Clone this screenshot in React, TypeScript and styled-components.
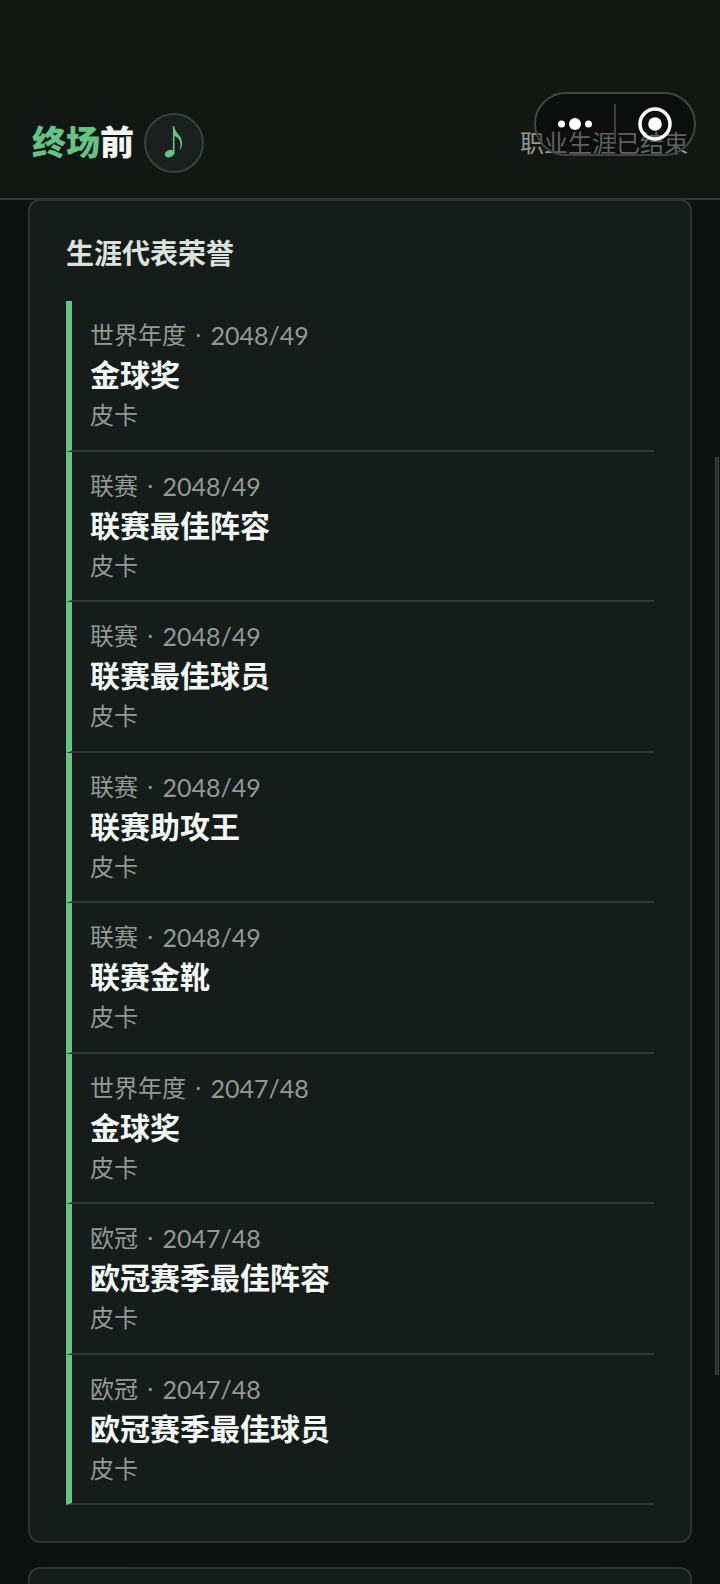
import React from "react";
import styled, { createGlobalStyle } from "styled-components";

const GlobalStyle = createGlobalStyle`
  *, *::before, *::after { box-sizing: border-box; }
  html, body { margin: 0; background: #0d1110; }
  body {
    overflow-x: hidden;
    font-family: Lato, "Noto Sans CJK SC", sans-serif;
    color: #f3f7f5;
  }
  h1, h2, h3, p, ul { margin: 0; padding: 0; }
  button { padding: 0; border: 0; background: none; color: inherit; font: inherit; cursor: pointer; }
`;

const Screen = styled.div`
  position: relative;
  height: 100vh;
  overflow: hidden;
  background: linear-gradient(90deg, #0d110f 0%, #0e1211 50%, #0d1110 100%);
`;

const Header = styled.header`
  display: flex;
  align-items: center;
  justify-content: space-between;
  padding: 113px 32px 25px;
  border-bottom: 2px solid #333836;
  background: #121714;
`;

const Brand = styled.div`
  display: flex;
  align-items: center;
  gap: 10px;
`;

const Logo = styled.h1`
  padding-bottom: 2px;
  font-size: 34px;
  line-height: 40px;
  font-weight: 900;
`;

const LogoAccent = styled.span`
  color: #66c285;
`;

const MusicButton = styled.button`
  display: grid;
  place-items: center;
  width: 60px;
  height: 60px;
  border: 2px solid #3b413e;
  border-radius: 50%;
  background: #1a201d;
  color: #66c285;
`;

const Status = styled.p`
  font-size: 24px;
  line-height: 40px;
  color: #929996;
`;

const Capsule = styled.div`
  position: absolute;
  top: 92px;
  right: 24px;
  display: flex;
  align-items: center;
  width: 162px;
  height: 64px;
  border: 2px solid #414543;
  border-radius: 32px;
  background: rgba(0, 0, 0, 0.36);
`;

const CapsuleButton = styled.button`
  flex: 1;
  display: grid;
  place-items: center;
  height: 60px;
  color: #ffffff;
`;

const CapsuleDivider = styled.span`
  width: 2px;
  height: 40px;
  background: #3d413f;
`;

const Content = styled.main`
  display: flex;
  flex-direction: column;
  gap: 24px;
  padding: 0 28px;
`;

const Card = styled.section<{ $continued?: boolean }>`
  padding: 32px 36px 36px;
  margin-top: ${(p) => (p.$continued ? "-1px" : "0")};
  border: 2px solid #2e3532;
  border-radius: 12px;
  background: #161c1a;
`;

const CardTitle = styled.h2`
  margin-bottom: 28px;
  font-size: 28px;
  line-height: 40px;
  font-weight: 700;
  color: #dce3df;
`;

const HonourList = styled.ul`
  display: grid;
  grid-auto-rows: 1fr;
  min-height: 1204px;
  list-style: none;
`;

const Honour = styled.li`
  padding: 15px 0 13px 18px;
  border-left: 6px solid #66c285;
  border-bottom: 2px solid #333836;
`;

const Meta = styled.p`
  display: flex;
  gap: 9px;
  font-size: 24px;
  line-height: 38px;
  color: #929996;
`;

const Dot = styled.span`
  font-family: "Noto Sans", sans-serif;
`;

const Season = styled.span`
  font-size: 25px;
`;

const HonourName = styled.h3`
  font-size: 30px;
  line-height: 40px;
  font-weight: 700;
`;

const Player = styled.p`
  font-size: 24px;
  line-height: 42px;
  color: #929996;
`;

const ScrollThumb = styled.div`
  position: absolute;
  top: 457px;
  right: 1px;
  width: 4px;
  height: 918px;
  border: 1px solid #3b403e;
  background: #2a2f2d;
`;

const honours = [
  { scope: "世界年度", season: "2048/49", name: "金球奖" },
  { scope: "联赛", season: "2048/49", name: "联赛最佳阵容" },
  { scope: "联赛", season: "2048/49", name: "联赛最佳球员" },
  { scope: "联赛", season: "2048/49", name: "联赛助攻王" },
  { scope: "联赛", season: "2048/49", name: "联赛金靴" },
  { scope: "世界年度", season: "2047/48", name: "金球奖" },
  { scope: "欧冠", season: "2047/48", name: "欧冠赛季最佳阵容" },
  { scope: "欧冠", season: "2047/48", name: "欧冠赛季最佳球员" },
];

const NoteIcon = () => (
  <svg width="20" height="34" viewBox="0 0 20 34" aria-hidden="true">
    <ellipse cx="5.6" cy="27.6" rx="4.900" ry="3.600" transform="rotate(-20 5.6 27.6)" fill="currentColor" />
    <path
      d="M8.900 0h1.300c.5 4.200 2.400 6.200 4.700 8.900 3.700 4.300 4.200 9.300 1.700 14.600l-.7-.4c1.600-5.200.4-10.400-5.400-13.300V27.600H8.900z"
      fill="currentColor"
    />
  </svg>
);

const MoreIcon = () => (
  <svg width="36" height="14" viewBox="0 0 36 14" fill="currentColor" aria-hidden="true">
    <circle cx="4.500" cy="7" r="3.500" />
    <circle cx="18" cy="7" r="6" />
    <circle cx="31.500" cy="7" r="3.500" />
  </svg>
);

const CloseIcon = () => (
  <svg width="34" height="34" viewBox="0 0 34 34" aria-hidden="true">
    <circle cx="17" cy="17" r="15" fill="none" stroke="currentColor" strokeWidth="3.500" />
    <circle cx="17" cy="17" r="6.800" fill="currentColor" />
  </svg>
);

export default function App() {
  return (
    <>
      <GlobalStyle />
      <Screen>
        <Header>
          <Brand>
            <Logo>
              <LogoAccent>终场</LogoAccent>前
            </Logo>
            <MusicButton aria-label="音乐">
              <NoteIcon />
            </MusicButton>
          </Brand>
          <Status>职业生涯已结束</Status>
        </Header>
        <Content>
          <Card $continued>
            <CardTitle>生涯代表荣誉</CardTitle>
            <HonourList>
              {honours.map((h) => (
                <Honour key={h.scope + h.season + h.name}>
                  <Meta>
                    <span>{h.scope}</span>
                    <Dot>·</Dot>
                    <Season>{h.season}</Season>
                  </Meta>
                  <HonourName>{h.name}</HonourName>
                  <Player>皮卡</Player>
                </Honour>
              ))}
            </HonourList>
          </Card>
          <Card />
        </Content>
        <Capsule>
          <CapsuleButton aria-label="更多">
            <MoreIcon />
          </CapsuleButton>
          <CapsuleDivider />
          <CapsuleButton aria-label="关闭">
            <CloseIcon />
          </CapsuleButton>
        </Capsule>
        <ScrollThumb />
      </Screen>
    </>
  );
}
